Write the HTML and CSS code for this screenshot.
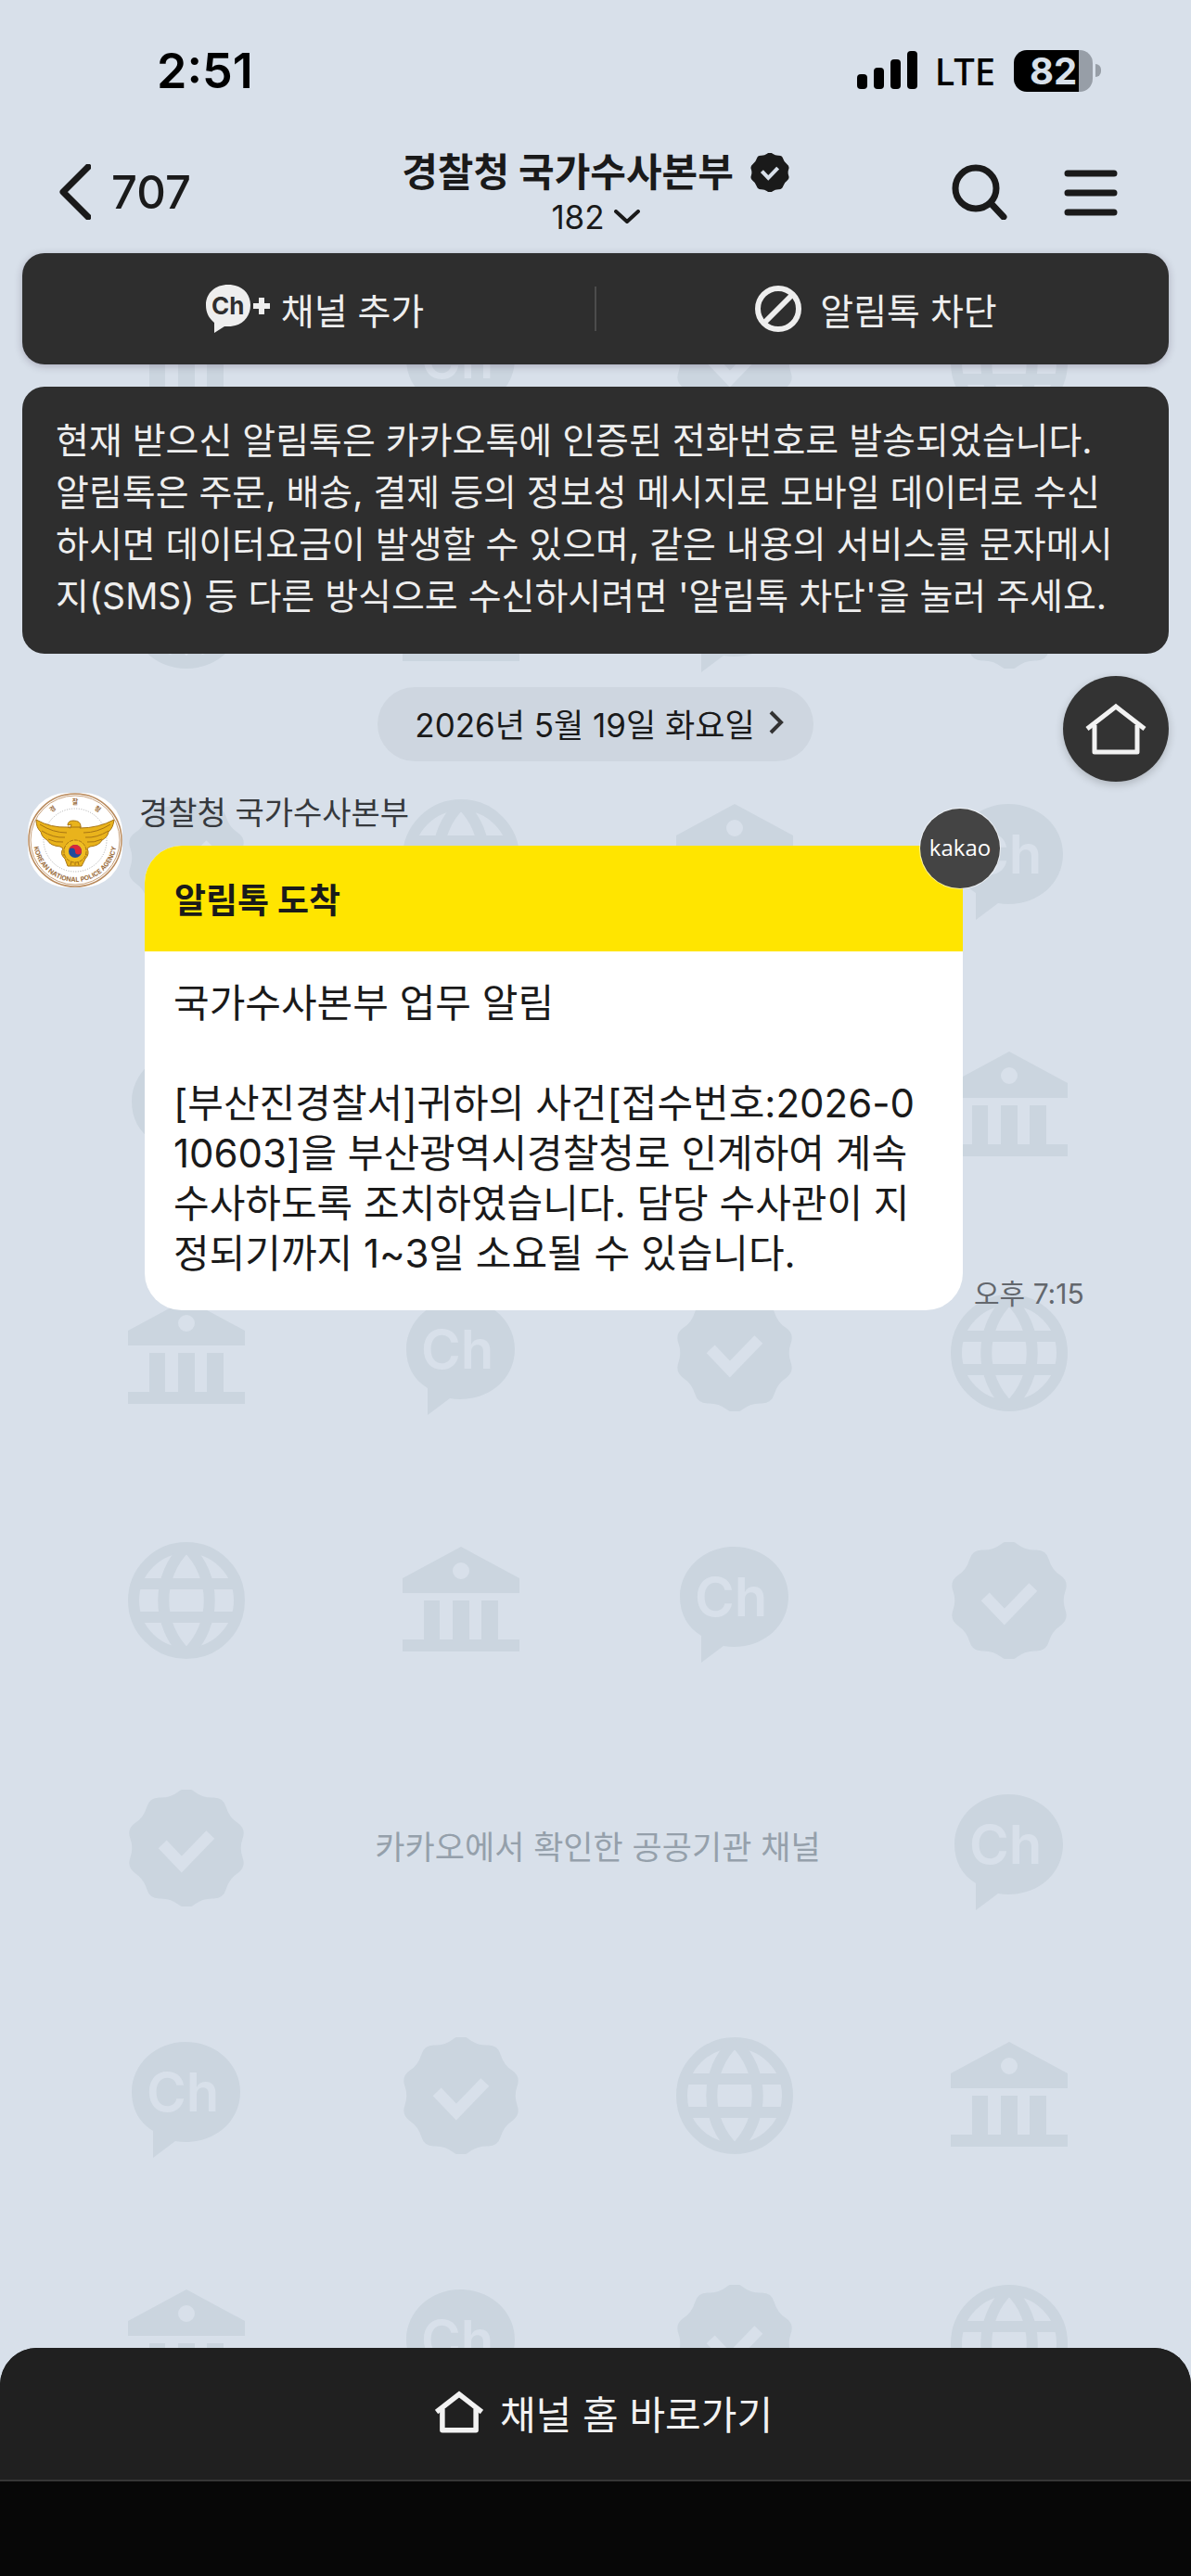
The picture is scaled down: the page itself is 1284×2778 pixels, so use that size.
FILE: index.html
```html
<!DOCTYPE html>
<html lang="ko">
<head>
<meta charset="utf-8">
<meta name="viewport" content="width=device-width, initial-scale=1">
<title>경찰청 국가수사본부</title>
<link rel="stylesheet" href="styles.css">
</head>
<body>
<svg class="sprite" aria-hidden="true">
  <symbol id="seal" viewBox="2 2 122 122">
    <path fill="currentColor" transform="translate(63 63)" d="M8.5 -58.9Q17 -52.3 27.8 -52.7Q38.5 -53 41.5 -42.7Q44.5 -32.3 53.4 -26.3Q62.3 -20.2 58.7 -10.1Q55 0 58.7 10.1Q62.3 20.2 53.4 26.3Q44.5 32.3 41.5 42.7Q38.5 53 27.8 52.7Q17 52.3 8.5 58.9Q0 65.5 -8.5 58.9Q-17 52.3 -27.8 52.7Q-38.5 53 -41.5 42.7Q-44.5 32.3 -53.4 26.3Q-62.3 20.2 -58.7 10.1Q-55 0 -58.7 -10.1Q-62.3 -20.2 -53.4 -26.3Q-44.5 -32.3 -41.5 -42.7Q-38.5 -53 -27.8 -52.7Q-17 -52.3 -8.5 -58.9Q0 -65.5 8.5 -58.9Z"/>
    <path fill="none" stroke="#d8e0ea" stroke-width="12" stroke-linecap="butt" stroke-linejoin="miter" d="M38 59L58 80L88 49"/>
  </symbol>
  <symbol id="hall" viewBox="0 0 126 126">
    <path fill="currentColor" fill-rule="evenodd" d="M63 5L126 39V55H0V39ZM63 22a9 9 0 1 0 0 18a9 9 0 1 0 0-18ZM23 63H40V105H54V63H72V105H85V63H103V105H126V118H0V105H23Z"/>
  </symbol>
  <symbol id="globe" viewBox="0 0 126 126">
    <g fill="none" stroke="currentColor" stroke-width="12">
      <circle cx="63" cy="63" r="57"/>
      <path d="M8 45H118M8 81H118M63 5C30 36 30 90 63 121M63 5C96 36 96 90 63 121"/>
    </g>
  </symbol>
  <symbol id="bubble" viewBox="0 0 126 132">
    <path fill="currentColor" d="M62 5C95 5 121 29 121 59C121 90 95 113 62 113Q56 113 51 112L27 130V101C12 92 4 77 4 59C4 29 30 5 62 5Z"/>
  </symbol>
  <symbol id="home" viewBox="0 0 66 58">
    <path fill="none" stroke="currentColor" stroke-linejoin="round" d="M10 25V54H56V25"/>
    <path fill="none" stroke="currentColor" d="M2 29L33 5L64 29"/>
  </symbol>
</svg>

<div class="screen">
  <div class="status">
    <span class="clock">2:51</span>
    <div class="indicators">
      <svg class="signal" viewBox="0 0 66 42" aria-hidden="true"><rect y="25" width="11" height="16" rx="4"/><rect x="18" y="18" width="11" height="23" rx="4"/><rect x="36" y="9" width="11" height="32" rx="4"/><rect x="54" width="11" height="41" rx="4"/></svg>
      <span class="network">LTE</span>
      <span class="battery">82</span>
    </div>
  </div>

  <header class="header">
    <button class="back" type="button">
      <svg viewBox="0 0 34 60" aria-hidden="true"><path d="M31 3L4 30L31 57"/></svg>
      <span>707</span>
    </button>
    <div class="heading">
      <h1 class="title">경찰청 국가수사본부 <svg class="verified" aria-hidden="true"><use href="#seal"/></svg></h1>
      <button class="members" type="button">182 <svg viewBox="0 0 28 16" aria-hidden="true"><path d="M2 2L14 13L26 2"/></svg></button>
    </div>
    <div class="tools">
      <button type="button" aria-label="검색"><svg viewBox="0 0 60 60" aria-hidden="true"><circle cx="26" cy="26" r="22"/><path d="M42 42L56 57"/></svg></button>
      <button type="button" aria-label="메뉴"><svg viewBox="0 0 60 60" aria-hidden="true"><path d="M5 10H55M5 31H55M5 52H55"/></svg></button>
    </div>
  </header>

  <main class="chat">
    <div class="pattern">
      <svg><use href="#hall"/></svg><svg viewBox="0 0 126 126"><use href="#bubble" width="126" height="132"/><text x="20" y="80">Ch</text></svg><svg><use href="#seal"/></svg><svg><use href="#globe"/></svg>
      <svg><use href="#globe"/></svg><svg><use href="#hall"/></svg><svg viewBox="0 0 126 126"><use href="#bubble" width="126" height="132"/></svg><svg><use href="#seal"/></svg>
      <svg><use href="#seal"/></svg><svg><use href="#globe"/></svg><svg><use href="#hall"/></svg><svg viewBox="0 0 126 126"><use href="#bubble" width="126" height="132"/><text x="20" y="80">Ch</text></svg>
      <svg viewBox="0 0 126 126"><use href="#bubble" width="126" height="132"/></svg><svg><use href="#seal"/></svg><svg><use href="#globe"/></svg><svg><use href="#hall"/></svg>
      <svg><use href="#hall"/></svg><svg viewBox="0 0 126 126"><use href="#bubble" width="126" height="132"/><text x="20" y="80">Ch</text></svg><svg><use href="#seal"/></svg><svg><use href="#globe"/></svg>
      <svg><use href="#globe"/></svg><svg><use href="#hall"/></svg><svg viewBox="0 0 126 126"><use href="#bubble" width="126" height="132"/><text x="20" y="80">Ch</text></svg><svg><use href="#seal"/></svg>
      <svg><use href="#seal"/></svg><p class="official">카카오에서 확인한 공공기관 채널</p><svg viewBox="0 0 126 126"><use href="#bubble" width="126" height="132"/><text x="20" y="80">Ch</text></svg>
      <svg viewBox="0 0 126 126"><use href="#bubble" width="126" height="132"/><text x="20" y="80">Ch</text></svg><svg><use href="#seal"/></svg><svg><use href="#globe"/></svg><svg><use href="#hall"/></svg>
      <svg><use href="#hall"/></svg><svg viewBox="0 0 126 126"><use href="#bubble" width="126" height="132"/><text x="20" y="80">Ch</text></svg><svg><use href="#seal"/></svg><svg><use href="#globe"/></svg>
    </div>

    <div class="actions">
      <button class="action add" type="button">
        <svg class="add-icon" viewBox="0 0 70 54" aria-hidden="true"><path fill="currentColor" d="M24 1C38 1 48 10 48 23C48 37 38 46 24 46L20 46L9 53V42C3 37 0 31 0 23C0 10 10 1 24 1ZM57 15H63V21H69V27H63V33H57V27H51V21H57Z"/><text x="6" y="33">Ch</text></svg>
        채널 추가
      </button>
      <span class="divider"></span>
      <button class="action block" type="button">
        <svg class="block-icon" viewBox="0 0 50 50" aria-hidden="true"><circle cx="25" cy="25" r="22"/><path d="M10 40L40 10"/></svg>
        알림톡 차단
      </button>
    </div>

    <p class="notice">현재 받으신 알림톡은 카카오톡에 인증된 전화번호로 발송되었습니다.<br>알림톡은 주문, 배송, 결제 등의 정보성 메시지로 모바일 데이터로 수신하시면 데이터요금이 발생할 수 있으며, 같은 내용의 서비스를 문자메시지(SMS) 등 다른 방식으로 수신하시려면 '알림톡 차단'을 눌러 주세요.</p>

    <div class="day">
      <button class="date" type="button">2026년 5월 19일 화요일 <svg viewBox="0 0 16 26" aria-hidden="true"><path d="M2 2L13 13L2 24"/></svg></button>
      <button class="home" type="button" aria-label="채널 홈"><svg><use href="#home"/></svg></button>
    </div>

    <article class="message">
      <svg class="avatar" viewBox="0 0 102 102" role="img" aria-label="경찰청">
        <defs>
          <path id="arc-top" d="M12 51A39 39 0 0 1 90 51"/>
          <path id="arc-bottom" d="M6 51A45 45 0 0 0 96 51"/>
        </defs>
        <rect width="102" height="102" rx="42" fill="#fff"/>
        <circle cx="51" cy="51" r="50" fill="#fff" stroke="#b98a5c" stroke-width="1.5"/>
        <circle cx="51" cy="51" r="48" fill="none" stroke="#c9a27c" stroke-width="1"/>
        <circle cx="51" cy="51" r="34" fill="none" stroke="#aaa" stroke-width="1" stroke-dasharray="1 1.6"/>
        <g class="emblem-text">
          <text><textPath href="#arc-top" startOffset="30%" text-anchor="middle">경</textPath></text>
          <text><textPath href="#arc-top" startOffset="50%" text-anchor="middle">찰</textPath></text>
          <text><textPath href="#arc-top" startOffset="70%" text-anchor="middle">청</textPath></text>
          <text><textPath href="#arc-bottom" startOffset="50%" text-anchor="middle">KOREAN NATIONAL POLICE AGENCY</textPath></text>
        </g>
        <path fill="#e9b31c" stroke="#a87513" stroke-width="1" stroke-linejoin="round" d="M9 29Q25 38 43 37L46 38L47 34L43 35Q43 30 49 30Q57 30 57 36L56 38Q76 38 93 29Q92 38 87 42Q86 48 80 51Q77 57 67 58L64 60Q67 66 62 71L58 79H43L40 71Q34 66 38 60L35 58Q24 57 21 51Q15 48 14 42Q9 38 9 29Z"/>
        <path fill="none" stroke="#a87513" stroke-width="1" d="M13 34Q27 43 42 43M15 41Q28 49 40 48M22 50Q31 54 38 53M89 34Q75 43 60 43M87 41Q74 49 62 48M80 50Q71 54 64 53M43 37H58M46 78L48 70M51 78V70M55 78L53 70M40 61L46 62M38 67L45 65M62 61L56 62M64 67L57 65"/>
        <circle cx="51" cy="63" r="12" fill="#efbd22" stroke="#a87513" stroke-width="1" stroke-dasharray="4 1"/>
        <circle cx="51" cy="63" r="7" fill="#1f4b9c"/>
        <path fill="#dc2638" d="M44 63A7 7 0 0 1 58 63A3.5 3.5 0 0 1 51 63A3.5 3.5 0 0 0 44 63Z"/>
      </svg>
      <div class="body">
        <h2 class="sender">경찰청 국가수사본부</h2>
        <div class="line">
          <div class="card">
            <h3 class="card-title">알림톡 도착</h3>
            <div class="card-text">
              <p>국가수사본부 업무 알림</p>
              <p>[부산진경찰서]귀하의 사건[접수번호:2026-010603]을 부산광역시경찰청로 인계하여 계속 수사하도록 조치하였습니다. 담당 수사관이 지정되기까지 1~3일 소요될 수 있습니다.</p>
            </div>
            <span class="kakao">kakao</span>
          </div>
          <time class="time">오후 7:15</time>
        </div>
      </div>
    </article>
  </main>

  <footer class="footer">
    <a class="go-home" href="#home"><svg><use href="#home"/></svg>채널 홈 바로가기</a>
  </footer>
</div>
</body>
</html>
```

FILE: styles.css
```css
* {
  box-sizing: border-box;
}

body {
  margin: 0;
  background: #d8e0ea;
  color: #1a1a1a;
  font-family: Inter, "Noto Sans CJK KR", sans-serif;
}

h1,
h2,
h3,
p {
  margin: 0;
  font-weight: 400;
}

button {
  padding: 0;
  border: 0;
  background: none;
  color: inherit;
  font: inherit;
}

svg {
  display: block;
  flex: none;
}

.sprite {
  position: absolute;
  width: 0;
  height: 0;
}

.screen {
  display: flex;
  flex-direction: column;
  min-height: 100vh;
}

/* Status bar */
.status {
  display: flex;
  align-items: center;
  justify-content: space-between;
  height: 156px;
  padding: 0 106px 4px 169px;
  color: #000;
}

.clock {
  font-size: 52px;
  font-weight: 600;
}

.indicators {
  display: flex;
  align-items: center;
}

.signal {
  width: 66px;
  height: 42px;
}

.network {
  margin: 0 20px 0 18px;
  font-family: "Noto Sans", sans-serif;
  font-size: 40px;
  font-weight: 500;
}

.battery {
  position: relative;
  width: 85px;
  height: 45px;
  border-radius: 14px;
  background: linear-gradient(90deg, #000 82%, #979ea7 82%);
  color: #d8e0ea;
  font-size: 40px;
  font-weight: 700;
  line-height: 45px;
  text-align: center;
}

.battery::after {
  content: "";
  position: absolute;
  top: 15px;
  right: -9px;
  width: 6px;
  height: 14px;
  border-radius: 0 6px 6px 0;
  background: #979ea7;
}

/* Header */
.header {
  display: grid;
  grid-template-columns: 1fr auto 1fr;
  align-items: center;
  height: 100px;
  padding: 2px 64px 0;
}

.header svg {
  fill: none;
  stroke: currentColor;
  stroke-width: 7;
  stroke-linecap: round;
  stroke-linejoin: round;
}

.back {
  display: flex;
  align-items: center;
  gap: 22px;
  font-size: 49px;
  font-weight: 500;
}

.back svg {
  width: 34px;
  height: 60px;
}

.title,
.members {
  display: flex;
  align-items: center;
  justify-content: center;
}

.title {
  gap: 18px;
  font-size: 42px;
  font-weight: 700;
  line-height: 54px;
}

.title .verified {
  width: 42px;
  height: 42px;
  stroke: none;
}

.members {
  gap: 10px;
  width: 100%;
  font-size: 35px;
  line-height: 42px;
}

.members svg {
  width: 28px;
  height: 16px;
  stroke-width: 4;
}

.tools {
  display: flex;
  justify-content: flex-end;
  gap: 60px;
  padding-right: 14px;
}

.tools svg {
  width: 60px;
  height: 60px;
}

/* Chat area */
.chat {
  position: relative;
  flex: 1;
  padding: 17px 24px 0;
}

.chat > :not(.pattern) {
  position: relative;
}

.pattern {
  position: absolute;
  inset: 0;
  display: grid;
  grid-template-columns: repeat(4, 1fr);
  grid-auto-rows: 267px;
  align-items: center;
  justify-items: center;
  padding: 1px 48px 0 53px;
  overflow: hidden;
  color: #cbd5df;
}

.pattern svg {
  width: 126px;
  height: 126px;
  overflow: visible;
}

.pattern text {
  fill: #d8e0ea;
  font-size: 58px;
  font-weight: 600;
}

.official {
  grid-column: span 2;
  padding-bottom: 6px;
  color: #95a0ab;
  font-size: 35px;
}

.actions {
  display: flex;
  align-items: center;
  height: 120px;
  border-radius: 24px;
  background: #2e2e2e;
  color: #eee;
  box-shadow: 0 2px 8px rgba(40, 20, 50, 0.25);
}

.action {
  display: flex;
  flex: 1;
  align-items: center;
  justify-content: center;
  font-size: 39px;
}

.add {
  gap: 11px;
  padding-left: 14px;
}

.block {
  gap: 20px;
  padding-right: 14px;
}

.divider {
  width: 2px;
  height: 48px;
  background: #4c4c4c;
}

.add-icon {
  width: 70px;
  height: 54px;
}

.add-icon text {
  fill: #2e2e2e;
  font-size: 26px;
  font-weight: 700;
}

.block-icon {
  width: 50px;
  height: 50px;
  fill: none;
  stroke: currentColor;
  stroke-width: 6;
}

.notice {
  margin-top: 24px;
  padding: 30px 44px 34px 36px;
  border-radius: 24px;
  background: #2e2e2e;
  color: #eee;
  font-size: 39px;
  line-height: 56px;
  word-break: break-all;
}

.day {
  display: grid;
  grid-template-columns: 1fr auto 1fr;
  align-items: start;
  margin-top: 24px;
}

.date {
  display: flex;
  grid-column: 2;
  align-items: center;
  gap: 15px;
  height: 80px;
  margin-top: 12px;
  padding: 0 32px 4px 40px;
  border-radius: 40px;
  background: #ced6e0;
  font-size: 35px;
}

.date svg {
  width: 16px;
  height: 26px;
  fill: none;
  stroke: #333;
  stroke-width: 4;
}

.home {
  display: grid;
  place-items: center;
  justify-self: end;
  width: 114px;
  height: 114px;
  border-radius: 50%;
  background: #333;
  color: #f2f2f2;
  box-shadow: 0 3px 10px rgba(0, 0, 0, 0.2);
}

.home svg {
  width: 66px;
  height: 58px;
  stroke-width: 5;
}

/* Message */
.message {
  display: flex;
  align-items: flex-start;
  gap: 18px;
  margin-top: 12px;
  padding-left: 6px;
}

.avatar {
  width: 102px;
  height: 102px;
}

.emblem-text {
  fill: #9c6f3f;
  font-size: 7px;
  font-weight: 700;
}

.body {
  flex: 1;
  min-width: 0;
}

.sender {
  margin-bottom: 13px;
  color: #36393d;
  font-size: 34px;
  line-height: 44px;
}

.line {
  display: flex;
  align-items: flex-end;
  gap: 12px;
  padding-left: 6px;
}

.card {
  position: relative;
  flex: 0 1 882px;
  border-radius: 40px;
  background: #fff;
}

.card-title {
  padding: 33px 32px 27px;
  border-radius: 40px 40px 0 0;
  background: #ffe500;
  font-size: 37px;
  font-weight: 700;
  line-height: 54px;
}

.card-text {
  display: grid;
  gap: 54px;
  padding: 29px 42px 34px 31px;
  font-size: 42px;
  line-height: 54px;
  word-break: break-all;
}

.kakao {
  position: absolute;
  top: -40px;
  right: -40px;
  width: 86px;
  height: 86px;
  border-radius: 50%;
  background: #444;
  box-shadow: 0 0 0 1px rgba(255, 255, 255, 0.6);
  color: #fff;
  font-family: "Open Sans", sans-serif;
  font-size: 24px;
  line-height: 84px;
  text-align: center;
}

.time {
  flex: none;
  color: #63676d;
  font-size: 30px;
  line-height: 36px;
}

/* Bottom bar */
.footer {
  height: 246px;
  border-radius: 40px 40px 0 0;
  background: #070707;
}

.go-home {
  display: flex;
  align-items: center;
  justify-content: center;
  gap: 18px;
  height: 144px;
  padding: 0 0 4px 18px;
  border-bottom: 2px solid #363636;
  border-radius: 40px 40px 0 0;
  background: #202020;
  color: #f2f2f2;
  font-size: 42px;
  text-decoration: none;
}

.go-home svg {
  width: 52px;
  height: 46px;
  stroke-width: 7;
}
```
